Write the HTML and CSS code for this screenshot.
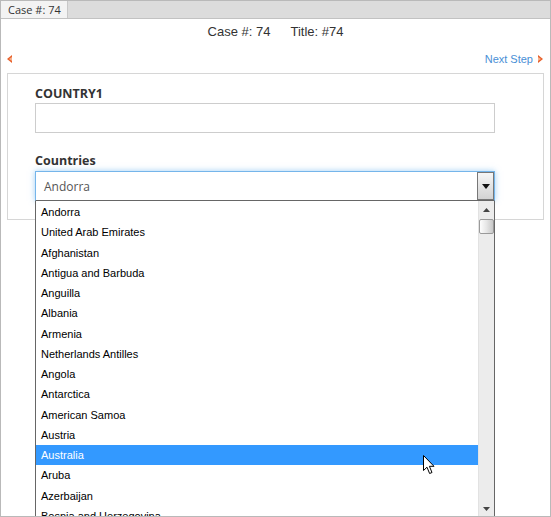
FILE: index.html
```html
<!DOCTYPE html>
<html>
<head>
<meta charset="utf-8">
<link rel="stylesheet" href="styles.css">
</head>
<body>
<div class="frame">
  <div class="tabbar"><div class="tab">Case #: 74</div></div>
  <div class="title"><span>Case #: 74</span><span>Title: #74</span></div>
  <div class="nav">
    <svg class="arrow" width="5" height="8" viewBox="0 0 5 8"><polygon points="5,0 0,4 5,8" fill="#e8602a"/><polygon points="5,2 2,4 5,6" fill="#f7b28f"/></svg>
    <a class="next">Next Step <svg class="arrow" width="5" height="8" viewBox="0 0 5 8"><polygon points="0,0 5,4 0,8" fill="#e8602a"/><polygon points="0,2 3,4 0,6" fill="#f7b28f"/></svg></a>
  </div>
  <div class="panel">
    <div class="label">COUNTRY1</div>
    <div class="input"></div>
    <div class="label label2">Countries</div>
    <div class="select-wrap">
      <div class="select">
        <span class="value">Andorra</span>
        <span class="btn"><svg width="8" height="5" viewBox="0 0 8 5"><polygon points="0,0 8,0 4,5" fill="#111"/></svg></span>
      </div>
      <div class="dropdown">
        <ul class="options">
          <li>Andorra</li>
          <li>United Arab Emirates</li>
          <li>Afghanistan</li>
          <li>Antigua and Barbuda</li>
          <li>Anguilla</li>
          <li>Albania</li>
          <li>Armenia</li>
          <li>Netherlands Antilles</li>
          <li>Angola</li>
          <li>Antarctica</li>
          <li>American Samoa</li>
          <li>Austria</li>
          <li class="active">Australia</li>
          <li>Aruba</li>
          <li>Azerbaijan</li>
          <li>Bosnia and Herzegovina</li>
        </ul>
        <div class="scrollbar">
          <svg class="up" width="7" height="4" viewBox="0 0 7 4"><polygon points="3.5,0 7,4 0,4" fill="#444"/></svg>
          <div class="thumb"></div>
          <svg class="down" width="7" height="4" viewBox="0 0 7 4"><polygon points="0,0 7,0 3.5,4" fill="#444"/></svg>
        </div>
      </div>
    </div>
  </div>
  <svg class="cursor" width="13" height="20" viewBox="0 0 13 20"><path d="M0.5,0.5 L0.5,15.5 L4,12.2 L6.6,18.5 L9,17.5 L6.4,11.3 L11,11.3 Z" fill="#fff" stroke="#000" stroke-width="1" stroke-linejoin="miter"/></svg>
</div>
</body>
</html>
```
FILE: styles.css
```css
* { box-sizing: border-box; }
html, body { margin: 0; padding: 0; background: #fff; }
.frame {
  position: relative;
  width: 551px;
  height: 517px;
  border: 1px solid #b9b9b9;
  overflow: hidden;
  font-family: "Liberation Sans", Arial, sans-serif;
  color: #333;
}
.tabbar {
  height: 18px;
  background: #dcdcdc;
  border-bottom: 1px solid #c2c2c2;
  display: flex;
}
.tab {
  width: 67px;
  background: #f3f3f3;
  border-right: 1px solid #c8c8c8;
  font-family: "Open Sans", sans-serif;
  font-size: 11px;
  line-height: 17px;
  padding-left: 7px;
  color: #333;
}
.title {
  display: flex;
  justify-content: center;
  gap: 20px;
  margin-top: 5px;
  font-size: 13px;
  line-height: 16px;
  color: #333;
}
.nav {
  display: flex;
  justify-content: space-between;
  align-items: center;
  margin-top: 12px;
  padding: 0 7px 0 6px;
  height: 14px;
}
.arrow { display: block; }
.next {
  display: flex;
  align-items: center;
  gap: 5px;
  font-size: 11px;
  color: #4a8fd6;
  line-height: 14px;
}
.panel {
  width: 537px;
  margin: 7px 0 0 6px;
  border: 1px solid #d6d6d6;
  padding: 11px 0 18px 27px;
}
.label {
  font-family: "Open Sans", sans-serif;
  font-weight: 700;
  font-size: 12.5px;
  line-height: 18px;
  color: #333;
}
.label2 { margin-top: 19px; }
.input {
  width: 460px;
  height: 30px;
  border: 1px solid #cdcdcd;
}
.select-wrap {
  position: relative;
  width: 460px;
  margin-top: 1px;
}
.select {
  height: 30px;
  border: 1px solid #75b5ea;
  border-bottom-color: #666;
  box-shadow: 0 0 6px rgba(82, 168, 236, 0.55);
  display: flex;
  align-items: center;
  justify-content: space-between;
  padding: 0 0 0 8px;
}
.value {
  font-family: "Open Sans", sans-serif;
  font-size: 12px;
  color: #555;
}
.btn {
  width: 17px;
  height: 28px;
  border: 1px solid #777;
  background: linear-gradient(#f6f6f6, #d2d2d2);
  display: flex;
  align-items: center;
  justify-content: center;
}
.btn svg { display: block; }
.dropdown {
  position: absolute;
  top: 30px;
  left: 0;
  width: 460px;
  height: 340px;
  border: 1px solid #666;
  border-top: none;
  background: #fff;
  display: flex;
  z-index: 2;
}
.options {
  list-style: none;
  margin: 0;
  padding: 1px 0 0 0;
  flex: 1;
}
.options li {
  height: 20.25px;
  line-height: 20.25px;
  padding-left: 5px;
  font-size: 11px;
  color: #000;
}
.options li.active {
  background: #3399ff;
  color: #fff;
}
.scrollbar {
  width: 16px;
  height: 315px;
  background: #ececec;
  border-left: 1px solid #e2e2e2;
  position: relative;
}
.scrollbar svg { position: absolute; left: 4px; }
.scrollbar .up { top: 7px; }
.scrollbar .down { top: 306px; }
.thumb {
  position: absolute;
  top: 18px;
  left: 0;
  width: 15px;
  height: 15px;
  border: 1px solid #9a9a9a;
  border-radius: 2px;
  background: linear-gradient(90deg, #fdfdfd, #e6e6e6 50%, #c8c8c8);
}
.cursor {
  position: absolute;
  left: 422px;
  top: 454px;
  z-index: 5;
}
```
